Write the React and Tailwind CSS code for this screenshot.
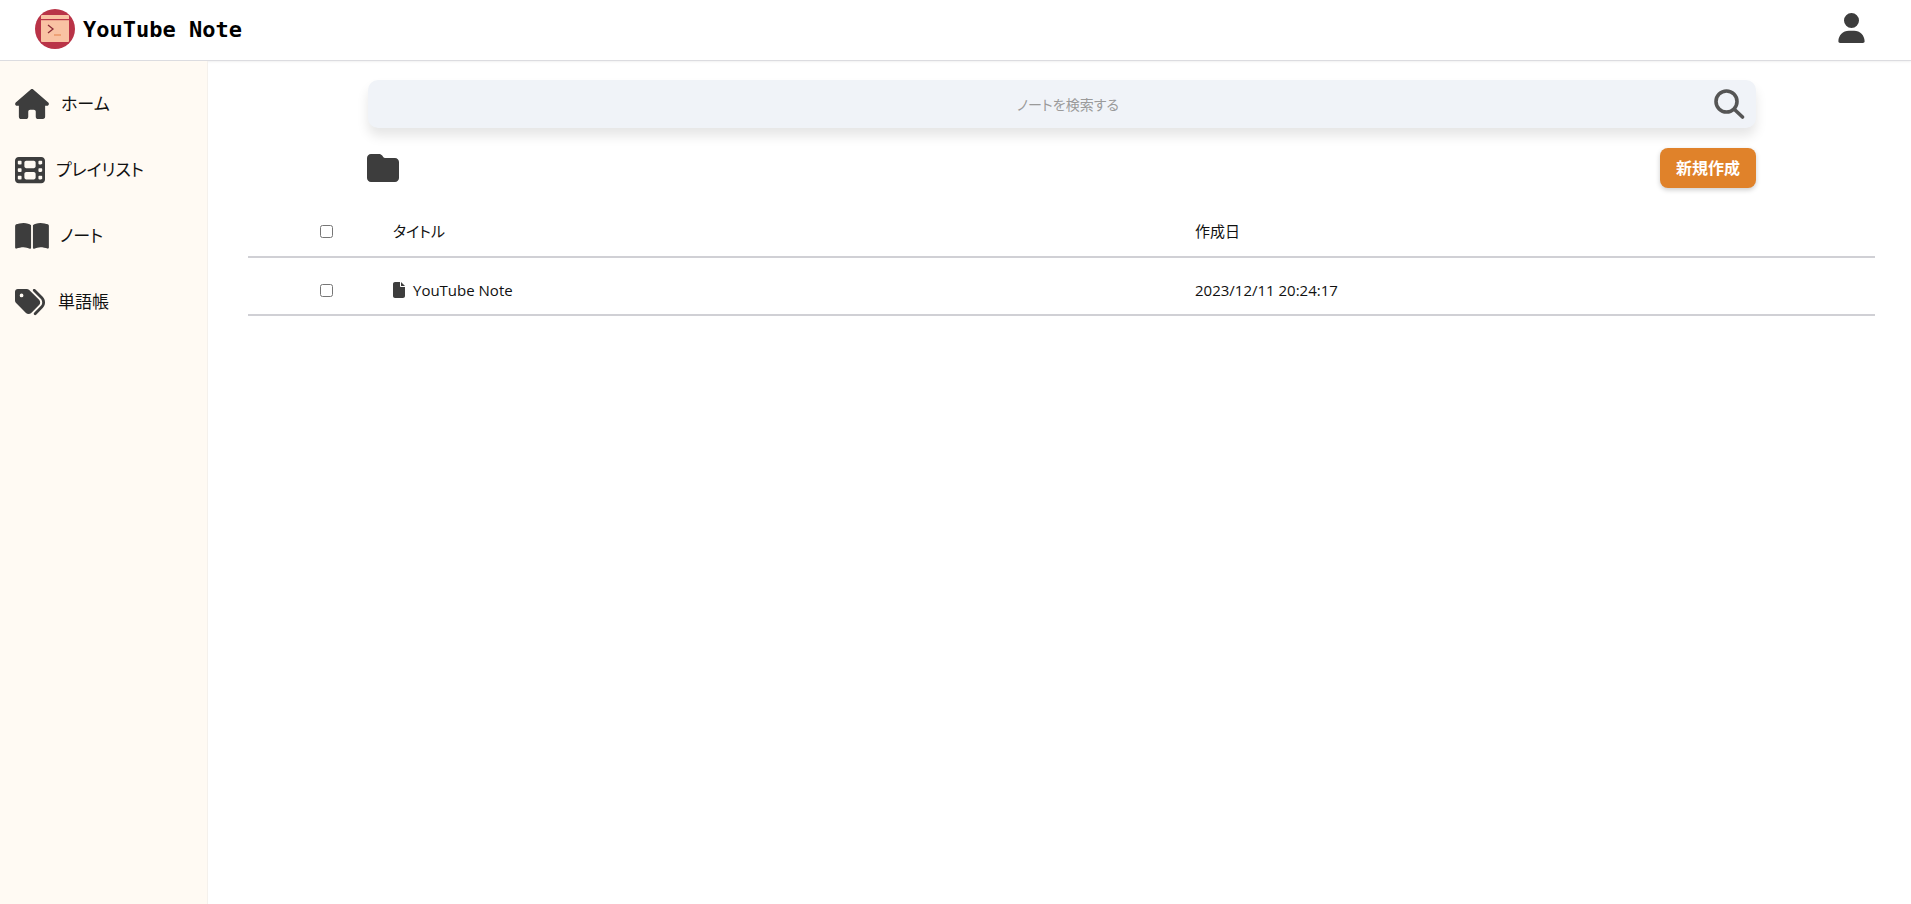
import { FaHouse, FaFilm, FaBookOpen, FaTags, FaFolder, FaFile, FaUser } from 'react-icons/fa6'

const font = { fontFamily: '"Open Sans", "Noto Sans CJK JP", sans-serif', fontFeatureSettings: '"palt"' }

const navItems = [
  { label: 'ホーム', icon: FaHouse, iconClass: 'w-[34px] h-[30px]', gap: 'gap-[12px]' },
  { label: 'プレイリスト', icon: FaFilm, iconClass: 'w-[30px] h-[30px]', gap: 'gap-[11px]' },
  { label: 'ノート', icon: FaBookOpen, iconClass: 'w-[34px] h-[30px]', gap: 'gap-[11px]' },
  { label: '単語帳', icon: FaTags, iconClass: 'w-[30px] h-[30px]', gap: 'gap-[13px]' },
]

function Logo() {
  return (
    <svg viewBox="0 0 40 40" className="w-10 h-10 shrink-0">
      <circle cx="20" cy="20" r="20" fill="#b93347" />
      <rect x="6" y="6" width="28" height="27" rx="1" fill="#f9c2a3" />
      <rect x="6" y="10" width="28" height="1.2" fill="#b93347" />
      <path d="M13 16l5 4-5 4" fill="none" stroke="#8a2a35" strokeWidth="1.3" />
      <path d="M19 26h7" stroke="#e8905f" strokeWidth="1.3" />
    </svg>
  )
}

function Sidebar() {
  return (
    <aside className="w-[208px] shrink-0 bg-[#fffaf3] border-r border-[#f5f1ec] pt-[10px]">
      {navItems.map((item) => {
        const Icon = item.icon
        return (
          <div key={item.label} className={`flex items-center h-[66px] pl-[15px] ${item.gap}`}>
            <Icon className={`${item.iconClass} text-[#3d3d3d] shrink-0`} />
            <span className="text-[17px] text-[#111]">{item.label}</span>
          </div>
        )
      })}
    </aside>
  )
}

function Row({ head, title, date }) {
  return (
    <div className={`grid grid-cols-[145px_802px_1fr] items-center border-b-2 border-[#d0d0d5] pt-[8px] ${head ? 'h-[59px]' : 'h-[58px]'}`}>
      <div className="pl-[72px] flex">
        <input type="checkbox" className="w-[13px] h-[13px] m-0" />
      </div>
      <div className="flex items-center gap-[8px] text-[15px] text-[#111]">
        {!head && <FaFile className="w-[12px] h-[16px] text-[#3d3d3d]" />}
        <span>{title}</span>
      </div>
      <div className="text-[15px] text-[#111]">{date}</div>
    </div>
  )
}

export default function App() {
  return (
    <div className="h-[904px] flex flex-col bg-white overflow-hidden" style={font}>
      <header className="h-[61px] shrink-0 flex items-center justify-between pl-[35px] pr-[46px] pb-[2px] border-b border-[#dcdce0] shadow-[0_1px_2px_rgba(0,0,0,0.06)]">
        <div className="flex items-center gap-[8px]">
          <Logo />
          <span className="text-[22px] font-bold text-black" style={{ fontFamily: '"DejaVu Sans Mono", monospace' }}>YouTube Note</span>
        </div>
        <FaUser className="w-[27px] h-[30px] text-[#3d3d3d] -mt-[2px]" />
      </header>
      <div className="flex flex-1 min-h-0">
        <Sidebar />
        <main className="flex-1 pl-[40px] pr-[36px] pt-[19px]">
          <div className="ml-[120px] mr-[119px]">
            <div className="relative h-[48px] rounded-[10px] bg-[#f0f3f8] shadow-[0_8px_12px_rgba(0,0,0,0.1)] flex items-center justify-center pl-[12px]">
              <span className="text-[14px] text-[#9a9a9a]">ノートを検索する</span>
              <svg viewBox="0 0 32 32" className="absolute right-[11px] top-[8px] w-[32px] h-[32px]" fill="none" stroke="#555" strokeWidth="3.6" strokeLinecap="round">
                <circle cx="13.5" cy="13.5" r="10.5" />
                <path d="M21.5 21.5l8 7.5" />
              </svg>
            </div>
            <div className="flex items-center justify-between mt-[20px] h-[40px]">
              <FaFolder className="w-[32px] h-[32px] text-[#3d3d3d] -ml-px" />
              <button className="w-[96px] h-[40px] rounded-[8px] bg-[#e0822a] text-white text-[16px] font-bold shadow-[0_2px_5px_rgba(0,0,0,0.2)]">新規作成</button>
            </div>
          </div>
          <div className="mt-[11px]">
            <Row head title="タイトル" date="作成日" />
            <Row title="YouTube Note" date="2023/12/11 20:24:17" />
          </div>
        </main>
      </div>
    </div>
  )
}
